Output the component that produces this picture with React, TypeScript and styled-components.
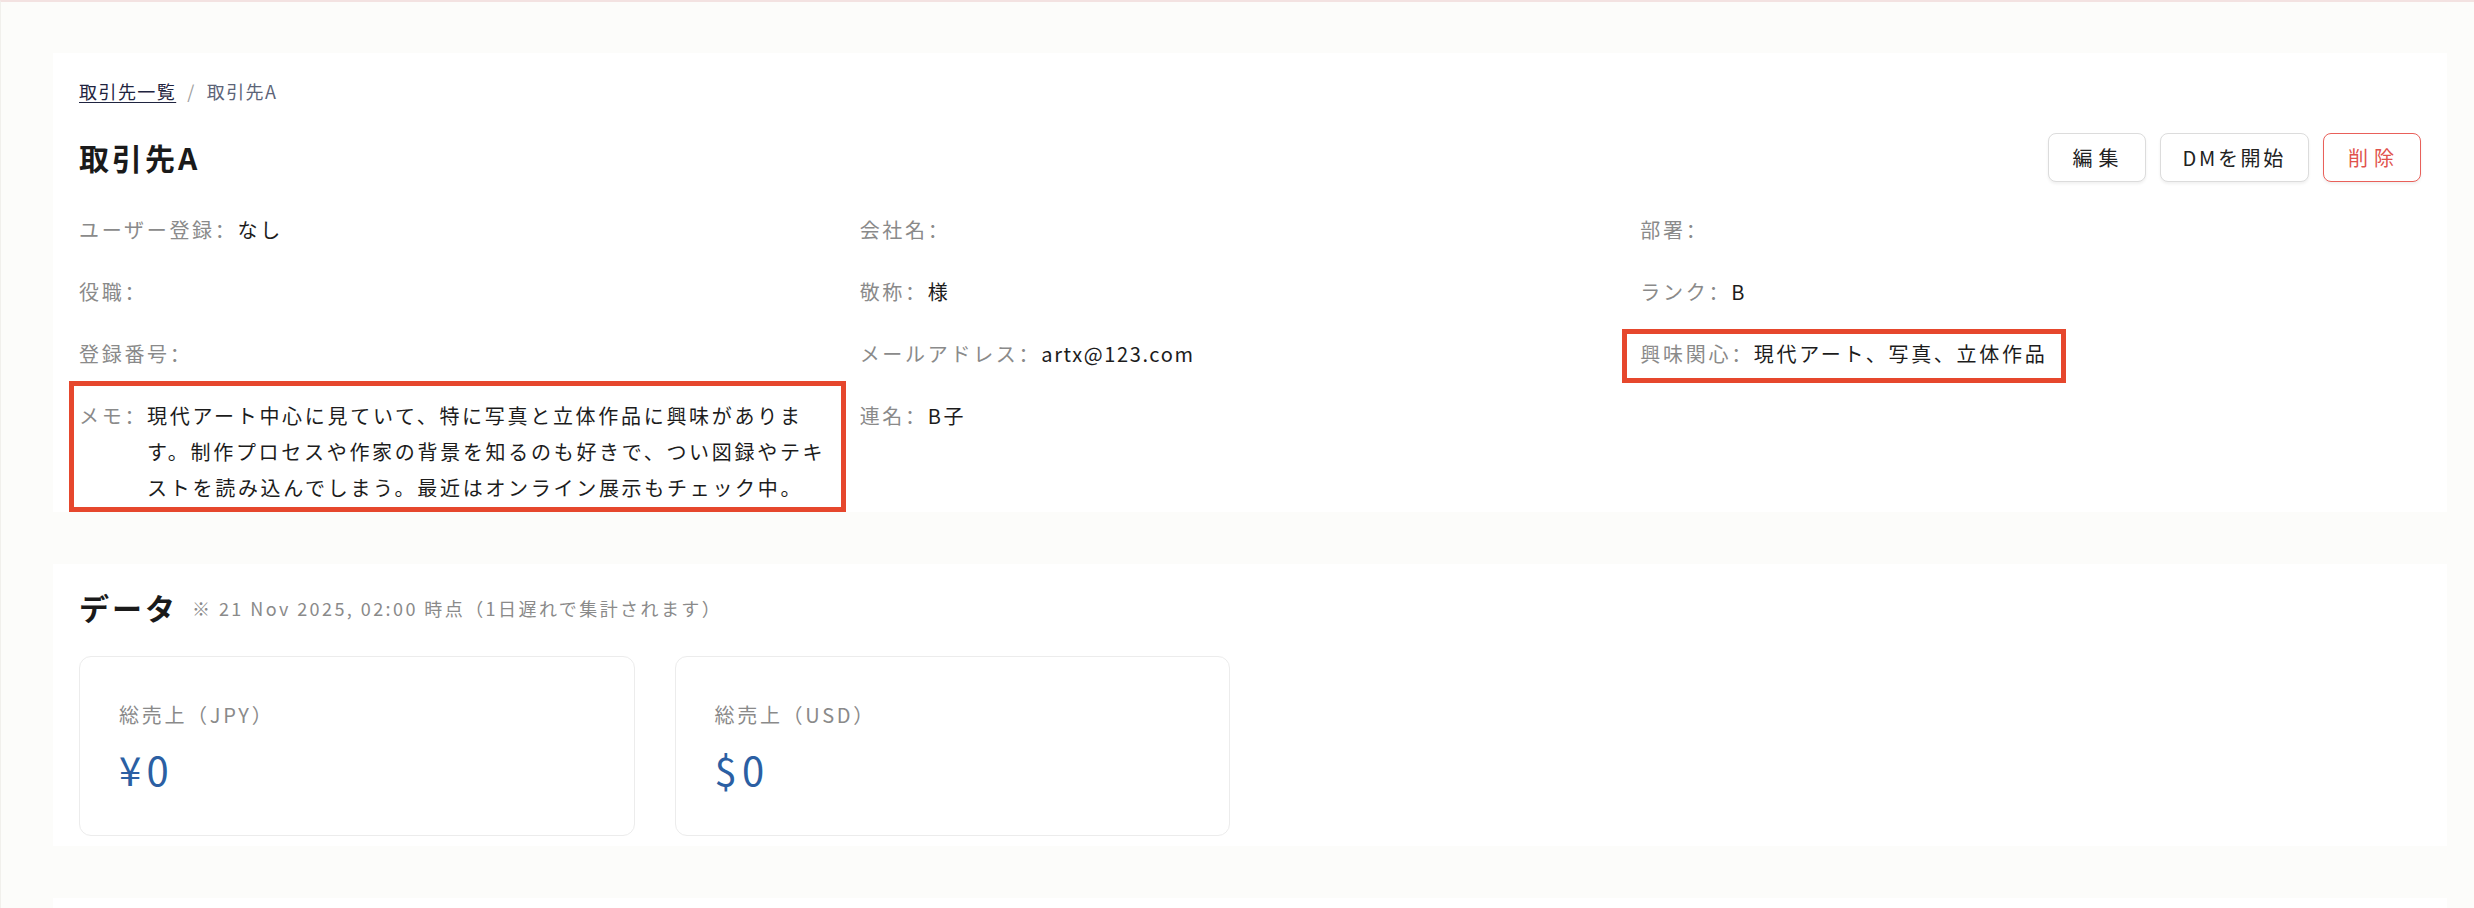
import React from "react";
import styled, { createGlobalStyle } from "styled-components";

const GlobalStyle = createGlobalStyle`
  html, body {
    margin: 0;
    padding: 0;
    background: #fcfcfa;
  }
  body {
    font-family: "Noto Sans CJK JP", "Noto Sans", sans-serif;
    color: #1c1c1c;
  }
  *, *::before, *::after {
    box-sizing: border-box;
  }
  * {
    letter-spacing: 0.135em;
  }
`;

const Page = styled.div`
  min-height: 908px;
  border-top: 2px solid #f3e2e1;
  border-left: 1px solid #f1f0ec;
  padding: 51px 27px 0 52px;
  display: flex;
  flex-direction: column;
  gap: 52px;
`;

const Card = styled.section<{ $pad: string; $minH?: number }>`
  background: #ffffff;
  padding: ${(p) => p.$pad};
  min-height: ${(p) => (p.$minH ? `${p.$minH}px` : "auto")};
`;

const Breadcrumb = styled.nav`
  display: flex;
  align-items: center;
  font-size: 18px;
  line-height: 28px;
`;

const CrumbLink = styled.a`
  color: #1f2440;
  letter-spacing: 0.08em;
  text-decoration: underline;
  text-underline-offset: 3px;
  text-decoration-thickness: 1px;
`;

const CrumbSep = styled.span`
  color: #a0a0a0;
  margin: 0 10px 0 11px;
`;

const CrumbCurrent = styled.span`
  color: #5c6478;
  letter-spacing: 0.08em;
`;

const TitleRow = styled.div`
  margin-top: 28px;
  height: 49px;
  display: flex;
  align-items: center;
  justify-content: space-between;
`;

const Title = styled.h1`
  margin: 0;
  font-size: 30px;
  line-height: 45px;
  font-weight: 700;
  color: #1a1a1a;
  letter-spacing: 0.1em;
`;

const Actions = styled.div`
  display: flex;
  gap: 14px;
`;

const ActionButton = styled.button<{ $danger?: boolean; $spaced?: boolean }>`
  height: 49px;
  padding: ${(p) => (p.$spaced ? "0 20px 0 24px" : "0 22px")};
  border-radius: 8px;
  border: 1px solid ${(p) => (p.$danger ? "#e9605a" : "#dcdcdc")};
  background: #ffffff;
  color: ${(p) => (p.$danger ? "#e0524c" : "#222222")};
  font-family: inherit;
  font-size: 20px;
  letter-spacing: ${(p) => (p.$spaced ? "0.3em" : "0.135em")};
  box-shadow: 0 2px 3px rgba(0, 0, 0, 0.06);
  cursor: pointer;
`;

const FieldGrid = styled.div`
  margin-top: 30px;
  display: grid;
  grid-template-columns: repeat(3, 1fr);
  row-gap: 26px;
`;

type Box = { l: number; t: number; w: number; h: number };

const Field = styled.div<{ $box?: Box }>`
  position: relative;
  display: flex;
  padding-right: 24px;
  font-size: 20px;
  line-height: 36px;

  ${(p) =>
    p.$box
      ? `
    &::after {
      content: "";
      position: absolute;
      box-sizing: border-box;
      left: ${p.$box.l}px;
      top: ${p.$box.t}px;
      width: ${p.$box.w}px;
      height: ${p.$box.h}px;
      border: 5px solid #e6472d;
      pointer-events: none;
    }
  `
      : ""}
`;

const Label = styled.span`
  flex-shrink: 0;
  white-space: nowrap;
  color: #8a8a8a;
`;

const Colon = styled.span`
  font-family: "Noto Sans CJK SC", "Noto Sans CJK JP", sans-serif;
`;

const Value = styled.span<{ $latin?: boolean }>`
  min-width: 0;
  color: #1c1c1c;
  letter-spacing: ${(p) => (p.$latin ? "0.08em" : "0.135em")};
`;

const DataHeader = styled.div`
  display: flex;
  align-items: center;
  gap: 14px;
`;

const DataTitle = styled.h2`
  margin: 0;
  font-size: 30px;
  line-height: 45px;
  font-weight: 700;
  color: #1a1a1a;
  letter-spacing: 0.1em;
`;

const DataNote = styled.span`
  font-size: 18px;
  line-height: 28px;
  color: #8a8a8a;
`;

const StatGrid = styled.div`
  margin-top: 26px;
  display: grid;
  grid-template-columns: repeat(4, 1fr);
  gap: 40px;
`;

const StatCard = styled.div`
  height: 180px;
  border: 1px solid #ececec;
  border-radius: 12px;
  padding: 40px 39px;
`;

const StatLabel = styled.div`
  font-size: 20px;
  line-height: 36px;
  color: #8a8a8a;
`;

const StatValue = styled.div`
  margin-top: 8px;
  font-size: 40px;
  line-height: 56px;
  color: #2b5fa3;
`;

const fields: { label: string; value?: string; latin?: boolean; box?: Box }[] = [
  { label: "ユーザー登録", value: "なし" },
  { label: "会社名" },
  { label: "部署" },
  { label: "役職" },
  { label: "敬称", value: "様" },
  { label: "ランク", value: "B" },
  { label: "登録番号" },
  { label: "メールアドレス", value: "artx@123.com", latin: true },
  {
    label: "興味関心",
    value: "現代アート、写真、立体作品",
    box: { l: -18, t: -7, w: 444, h: 54 },
  },
  {
    label: "メモ",
    value:
      "現代アート中心に見ていて、特に写真と立体作品に興味があります。制作プロセスや作家の背景を知るのも好きで、つい図録やテキストを読み込んでしまう。最近はオンライン展示もチェック中。",
    box: { l: -10, t: -17, w: 777, h: 131 },
  },
  { label: "連名", value: "B子" },
];

const stats = [
  { label: "総売上（JPY）", value: "¥0" },
  { label: "総売上（USD）", value: "$0" },
];

export default function App() {
  return (
    <>
      <GlobalStyle />
      <Page>
        <Card $pad="24px 26px 6px">
          <Breadcrumb>
            <CrumbLink>取引先一覧</CrumbLink>
            <CrumbSep>/</CrumbSep>
            <CrumbCurrent>取引先A</CrumbCurrent>
          </Breadcrumb>
          <TitleRow>
            <Title>取引先A</Title>
            <Actions>
              <ActionButton $spaced>編集</ActionButton>
              <ActionButton>DMを開始</ActionButton>
              <ActionButton $danger $spaced>
                削除
              </ActionButton>
            </Actions>
          </TitleRow>
          <FieldGrid>
            {fields.map((f) => (
              <Field key={f.label} $box={f.box}>
                <Label>
                  {f.label}
                  <Colon>：</Colon>
                </Label>
                {f.value && <Value $latin={f.latin}>{f.value}</Value>}
              </Field>
            ))}
          </FieldGrid>
        </Card>

        <Card $pad="21px 26px 10px">
          <DataHeader>
            <DataTitle>データ</DataTitle>
            <DataNote>※ 21 Nov 2025, 02:00 時点（1日遅れで集計されます）</DataNote>
          </DataHeader>
          <StatGrid>
            {stats.map((s) => (
              <StatCard key={s.label}>
                <StatLabel>{s.label}</StatLabel>
                <StatValue>{s.value}</StatValue>
              </StatCard>
            ))}
          </StatGrid>
        </Card>

        <Card $pad="0" $minH={120} />
      </Page>
    </>
  );
}
